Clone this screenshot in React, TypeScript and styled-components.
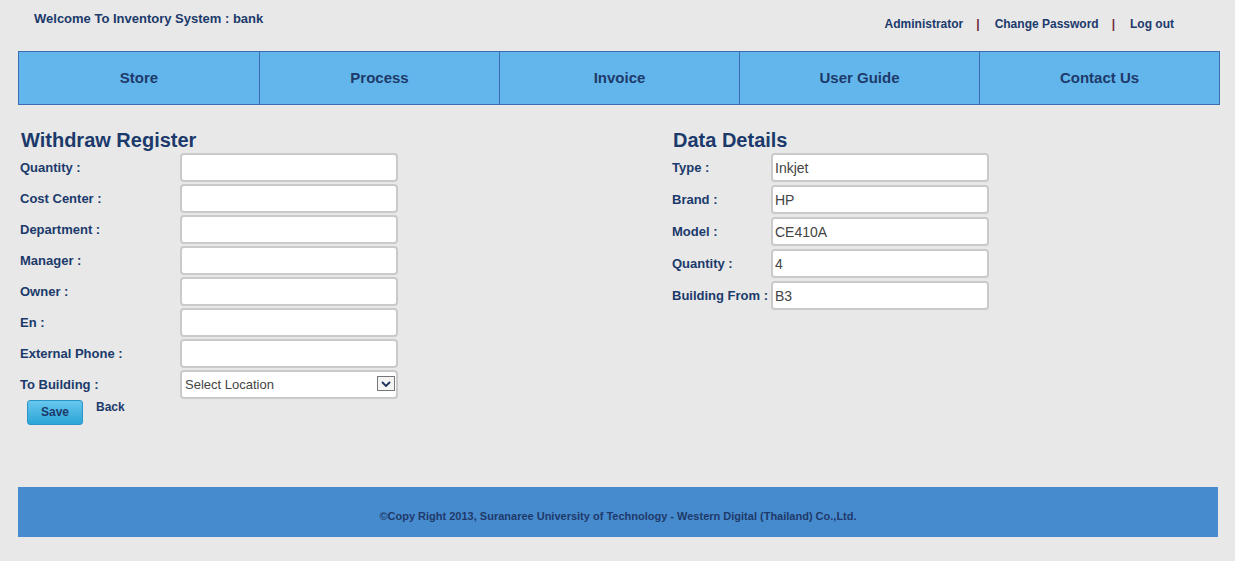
import React from "react";
import styled, { createGlobalStyle } from "styled-components";

const GlobalStyle = createGlobalStyle`
  html, body { margin: 0; padding: 0; }
  body {
    background: #e8e8e8;
    font-family: "Liberation Sans", Arial, sans-serif;
    color: #1b3a6b;
  }
`;

const Page = styled.div`
  width: 1202px;
  margin-left: 18px;
`;

const Header = styled.header`
  height: 51px;
  display: flex;
  justify-content: space-between;
  align-items: flex-start;
`;

const Welcome = styled.div`
  font-size: 13px;
  font-weight: bold;
  line-height: 15px;
  padding: 11px 0 0 16px;
`;

const TopLinks = styled.nav`
  display: flex;
  align-items: center;
  padding: 17px 46px 0 0;
  font-size: 12px;
  font-weight: bold;
  line-height: 14px;
`;

const TopLink = styled.a`
  color: #1b3a6b;
  text-decoration: none;
  cursor: pointer;
`;

const Pipe = styled.span`
  color: #6e2a3a;
  margin: 0 15px 0 13px;
`;

const Nav = styled.nav`
  display: grid;
  grid-template-columns: repeat(5, 1fr);
  height: 52px;
  border: 1px solid #3b6bb0;
  background: #63b6ec;
`;

const NavItem = styled.a<{ $first?: boolean }>`
  display: flex;
  align-items: center;
  justify-content: center;
  padding-bottom: 2px;
  font-size: 15px;
  font-weight: bold;
  color: #1e3a6a;
  border-left: ${(p) => (p.$first ? "none" : "1px solid #3b6bb0")};
  cursor: pointer;
`;

const Main = styled.main`
  height: 382px;
  box-sizing: border-box;
  display: grid;
  grid-template-columns: 652px 1fr;
  padding-top: 24px;
`;

const Section = styled.section`
  padding-left: 2px;
`;

const Title = styled.h2`
  margin: 0 0 0 1px;
  font-size: 20px;
  line-height: 22px;
  font-weight: bold;
  color: #1b3a6b;
`;

const Form = styled.div<{ $label: number; $gap: number }>`
  display: grid;
  grid-template-columns: ${(p) => p.$label}px 218px;
  row-gap: ${(p) => p.$gap}px;
  align-items: center;
  margin-top: 2px;
`;

const Label = styled.label`
  font-size: 13px;
  font-weight: bold;
  color: #1b3a6b;
  white-space: nowrap;
`;

const Input = styled.input`
  box-sizing: border-box;
  width: 218px;
  height: 29px;
  border: 2px solid #cacaca;
  border-radius: 4px;
  background: #fff;
  padding: 0 2px;
  font-family: "Liberation Sans", Arial, sans-serif;
  font-size: 14px;
  color: #444;
  outline: none;
`;

const SelectWrap = styled.div`
  position: relative;
  width: 218px;
  height: 29px;
`;

const Select = styled.select`
  box-sizing: border-box;
  width: 218px;
  height: 29px;
  border: 2px solid #cacaca;
  border-radius: 4px;
  background: #fff;
  padding: 0 3px;
  font-family: "Liberation Sans", Arial, sans-serif;
  font-size: 13px;
  color: #444;
  appearance: none;
  -webkit-appearance: none;
  outline: none;
`;

const Arrow = styled.span`
  position: absolute;
  right: 3px;
  top: 6px;
  width: 18px;
  height: 15px;
  box-sizing: border-box;
  border: 1px solid #777;
  background: #f4f4f4;
  display: flex;
  align-items: center;
  justify-content: center;
  pointer-events: none;
`;

const Actions = styled.div`
  display: flex;
  align-items: flex-start;
  gap: 13px;
  margin: 1px 0 0 7px;
`;

const SaveButton = styled.button`
  width: 56px;
  height: 25px;
  border: 1px solid #2a95c6;
  border-radius: 3px;
  background: linear-gradient(#67c7ee, #2ba5d6);
  color: #1b3a6b;
  font-family: "Liberation Sans", Arial, sans-serif;
  font-size: 12px;
  font-weight: bold;
  padding: 0 0 2px;
  cursor: pointer;
`;

const BackLink = styled.a`
  font-size: 12px;
  font-weight: bold;
  color: #1b3a6b;
  line-height: 14px;
  cursor: pointer;
`;

const Footer = styled.footer`
  width: 1200px;
  height: 50px;
  background: #478bcf;
  display: flex;
  align-items: center;
  justify-content: center;
  padding-top: 7px;
  box-sizing: border-box;
  font-size: 11px;
  font-weight: bold;
  color: #1e3a6a;
`;

const navItems = ["Store", "Process", "Invoice", "User Guide", "Contact Us"];
const withdrawFields = [
  "Quantity :",
  "Cost Center :",
  "Department :",
  "Manager :",
  "Owner :",
  "En :",
  "External Phone :",
];
const details: [string, string][] = [
  ["Type :", "Inkjet"],
  ["Brand :", "HP"],
  ["Model :", "CE410A"],
  ["Quantity :", "4"],
  ["Building From :", "B3"],
];

export default function App() {
  return (
    <>
      <GlobalStyle />
      <Page>
        <Header>
          <Welcome>Welcome To Inventory System : bank</Welcome>
          <TopLinks>
            <TopLink>Administrator</TopLink>
            <Pipe>|</Pipe>
            <TopLink>Change Password</TopLink>
            <Pipe>|</Pipe>
            <TopLink>Log out</TopLink>
          </TopLinks>
        </Header>
        <Nav>
          {navItems.map((n, i) => (
            <NavItem key={n} $first={i === 0}>
              {n}
            </NavItem>
          ))}
        </Nav>
        <Main>
          <Section>
            <Title>Withdraw Register</Title>
            <Form $label={160} $gap={2}>
              {withdrawFields.map((f) => (
                <React.Fragment key={f}>
                  <Label>{f}</Label>
                  <Input type="text" />
                </React.Fragment>
              ))}
              <Label>To Building :</Label>
              <SelectWrap>
                <Select defaultValue="">
                  <option value="">Select Location</option>
                  <option value="B1">B1</option>
                  <option value="B2">B2</option>
                  <option value="B3">B3</option>
                </Select>
                <Arrow>
                  <svg width="10" height="6" viewBox="0 0 10 6">
                    <path d="M1 1 L5 5 L9 1" fill="none" stroke="#1b2f5a" strokeWidth="1.8" />
                  </svg>
                </Arrow>
              </SelectWrap>
            </Form>
            <Actions>
              <SaveButton>Save</SaveButton>
              <BackLink>Back</BackLink>
            </Actions>
          </Section>
          <Section>
            <Title>Data Details</Title>
            <Form $label={99} $gap={3}>
              {details.map(([l, v]) => (
                <React.Fragment key={l}>
                  <Label>{l}</Label>
                  <Input type="text" defaultValue={v} />
                </React.Fragment>
              ))}
            </Form>
          </Section>
        </Main>
        <Footer>
          ©Copy Right 2013, Suranaree University of Technology - Western Digital (Thailand) Co.,Ltd.
        </Footer>
      </Page>
    </>
  );
}
